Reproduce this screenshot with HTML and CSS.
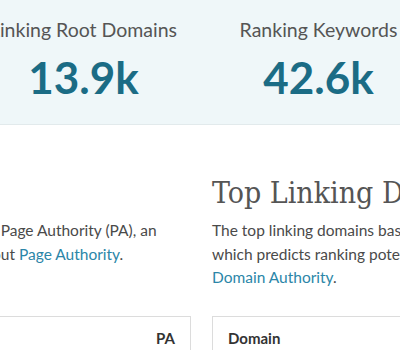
FILE: index.html
```html
<!DOCTYPE html>
<html lang="en">
<head>
    <meta charset="UTF-8">
    <meta name="viewport" content="width=device-width, initial-scale=1.0">
    <title>Link Explorer</title>
    <link rel="stylesheet" href="styles.css">
</head>
<body>
    <div class="metrics">
        <div class="stats">
            <div class="stat">
                <div class="label">Linking Root Domains</div>
                <div class="value">13.9k</div>
            </div>
            <div class="stat">
                <div class="label">Ranking Keywords</div>
                <div class="value">42.6k</div>
            </div>
        </div>
    </div>

    <div class="columns">
        <div class="col col_pages">
            <h2>Top Pages</h2>
            <p class="desc">
                The top pages on your site by Page Authority (PA), an<br>
                ranking score. Learn more about <a href="#">Page Authority</a>.
            </p>
            <div class="table">
                <div class="thead thead_right">PA</div>
            </div>
        </div>
        <div class="col">
            <h2>Top Linking Domains</h2>
            <p class="desc">
                The top linking domains based on Domain Authority (DA), an index<br>
                which predicts ranking potential. Learn more about<br>
                <a href="#">Domain Authority</a>.
            </p>
            <div class="table">
                <div class="thead">Domain</div>
            </div>
        </div>
    </div>
</body>
</html>
```

FILE: styles.css
```css
        body {
            margin: 0;
            overflow: hidden;
            background-color: #fff;
            font-family: Lato, 'Liberation Sans', sans-serif;
            color: #4a4a4a;
        }

        .metrics {
            background-color: #eff7f9;
            border-bottom: 1px solid #e2eaec;
            padding: 18px 0 21px 0;
        }

        .stats {
            display: flex;
            margin-left: -34px;
        }

        .stat {
            width: 235px;
            flex-shrink: 0;
            text-align: center;
        }

        .label {
            font-size: 19.5px;
            line-height: 24px;
            color: #555;
        }

        .value {
            margin-top: 9px;
            font-size: 44px;
            line-height: 52px;
            font-weight: bold;
            color: #1b6c85;
        }

        .columns {
            display: flex;
            gap: 21px;
            margin-left: -203px;
            padding-top: 50px;
        }

        .col {
            width: 400px;
            flex-shrink: 0;
        }

        .col_pages {
            width: 394px;
        }

        h2 {
            margin: 0;
            font-family: 'DejaVu Serif', serif;
            font-stretch: condensed;
            font-weight: normal;
            font-size: 30px;
            line-height: 36px;
            color: #555;
        }

        .desc {
            margin: 8px 0 0 0;
            min-height: 71px;
            font-size: 15.5px;
            line-height: 23.5px;
            white-space: nowrap;
        }

        .desc a {
            color: #2b86a8;
            text-decoration: none;
        }

        .table {
            margin-top: 26px;
            border: 1px solid #dcdcdc;
            height: 80px;
        }

        .thead {
            padding: 11px 15px;
            font-size: 15px;
            line-height: 20px;
            font-weight: bold;
            color: #333;
        }

        .thead_right {
            text-align: right;
        }
```
